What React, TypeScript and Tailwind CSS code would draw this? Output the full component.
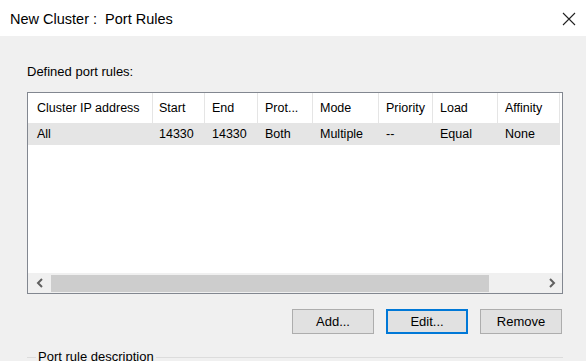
import React from "react";

const columns = [
  { label: "Cluster IP address", width: "w-[125px]", pad: "pl-[9px]" },
  { label: "Start", width: "w-[52px]", pad: "pl-[6px]" },
  { label: "End", width: "w-[53px]", pad: "pl-[7px]" },
  { label: "Prot...", width: "w-[55px]", pad: "pl-[7px]" },
  { label: "Mode", width: "w-[66px]", pad: "pl-[7px]" },
  { label: "Priority", width: "w-[54px]", pad: "pl-[7px]" },
  { label: "Load", width: "w-[65px]", pad: "pl-[7px]" },
  { label: "Affinity", width: "w-[62px]", pad: "pl-[7px]" },
];

const row = ["All", "14330", "14330", "Both", "Multiple", "--", "Equal", "None"];

function Button({ label, primary }: { label: string; primary?: boolean }) {
  return (
    <button
      className={
        "flex h-[25px] w-[82px] items-center justify-center bg-[#e1e1e1] text-[13px] text-black " +
        (primary ? "border-2 border-[#0078d7]" : "border border-[#adadad]")
      }
    >
      {label}
    </button>
  );
}

export default function App() {
  return (
    <div
      className="flex h-[361px] w-[586px] flex-col overflow-hidden bg-[#f0f0f0] text-black"
      style={{ fontFamily: '"Liberation Sans", Arial, sans-serif' }}
    >
      {/* title bar */}
      <div className="flex h-[36px] shrink-0 items-center justify-between bg-white pl-[10px] pr-[10px] pt-[2px]">
        <span className="text-[14.5px] leading-none text-[#000]">New Cluster :&nbsp; Port Rules</span>
        <svg width="14" height="14" viewBox="0 0 14 14" className="mr-[0px]">
          <path d="M1 1 L13 13 M13 1 L1 13" stroke="#222" strokeWidth="1.1" />
        </svg>
      </div>

      <div className="flex flex-col pl-[27px] pr-[23px]">
        <p className="mt-[28px] h-[16px] text-[13px] leading-[16px]">Defined port rules:</p>

        {/* list view */}
        <div className="mt-[12px] flex h-[202px] flex-col border border-[#828790] bg-white">
          <div className="flex h-[30px] shrink-0 items-center text-[12.5px]">
            {columns.map((c) => (
              <div
                key={c.label}
                className={`${c.width} ${c.pad} flex h-full shrink-0 items-center border-r border-[#e5e5e5] whitespace-nowrap`}
              >
                {c.label}
              </div>
            ))}
          </div>
          <div className="flex h-[22px] w-[532px] shrink-0 items-center bg-[#e5e5e5] text-[12.5px]">
            {row.map((v, i) => (
              <div
                key={i}
                className={`${columns[i].width} ${columns[i].pad} shrink-0 whitespace-nowrap`}
              >
                {v}
              </div>
            ))}
          </div>
          <div className="flex-1" />
          {/* horizontal scrollbar */}
          <div className="flex h-[20px] shrink-0 items-center bg-[#f0f0f0]">
            <div className="flex h-full w-[23px] items-center justify-center">
              <svg width="8" height="10" viewBox="0 0 8 10">
                <path d="M6 1 L2 5 L6 9" stroke="#606060" strokeWidth="2" fill="none" />
              </svg>
            </div>
            <div className="h-[17px] w-[438px] bg-[#cdcdcd]" />
            <div className="flex-1" />
            <div className="flex h-full w-[20px] items-center justify-center">
              <svg width="8" height="10" viewBox="0 0 8 10">
                <path d="M2 1 L6 5 L2 9" stroke="#606060" strokeWidth="2" fill="none" />
              </svg>
            </div>
          </div>
        </div>

        {/* buttons */}
        <div className="mt-[15px] flex justify-end gap-[12px] pr-[1px]">
          <Button label="Add..." />
          <Button label="Edit..." primary />
          <Button label="Remove" />
        </div>

        {/* group box */}
        <div className="mt-[15px] flex items-center">
          <div className="h-px w-[9px] bg-[#dcdcdc]" />
          <span className="px-[2px] text-[13px] leading-[16px] whitespace-nowrap">Port rule description</span>
          <div className="h-px flex-1 bg-[#dcdcdc]" />
        </div>
      </div>
    </div>
  );
}
